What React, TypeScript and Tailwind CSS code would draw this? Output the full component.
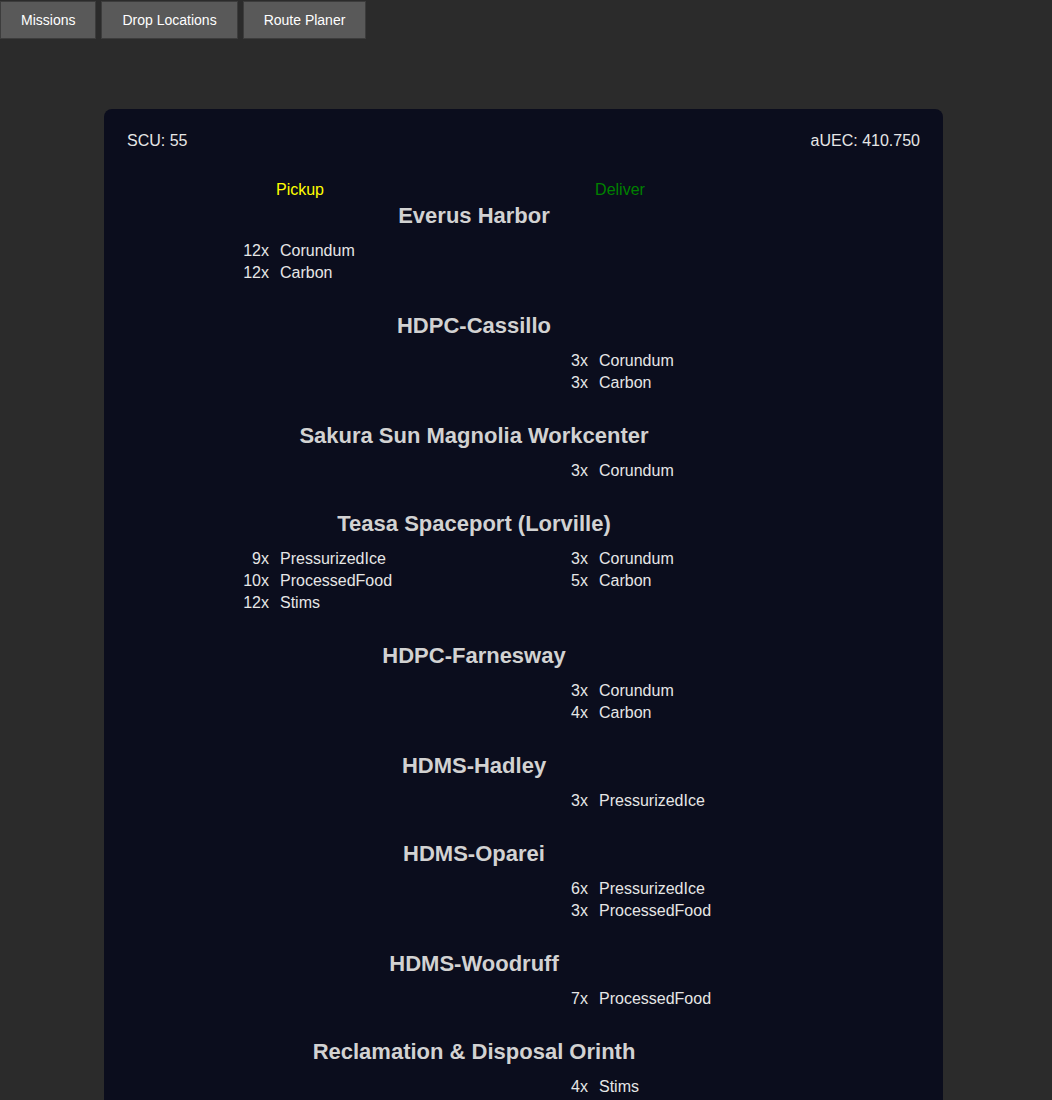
import React from 'react'

type Cargo = { qty: number; name: string }
type Stop = { name: string; pickup: Cargo[]; deliver: Cargo[] }

const stops: Stop[] = [
  {
    name: 'Everus Harbor',
    pickup: [
      { qty: 12, name: 'Corundum' },
      { qty: 12, name: 'Carbon' },
    ],
    deliver: [],
  },
  {
    name: 'HDPC-Cassillo',
    pickup: [],
    deliver: [
      { qty: 3, name: 'Corundum' },
      { qty: 3, name: 'Carbon' },
    ],
  },
  {
    name: 'Sakura Sun Magnolia Workcenter',
    pickup: [],
    deliver: [{ qty: 3, name: 'Corundum' }],
  },
  {
    name: 'Teasa Spaceport (Lorville)',
    pickup: [
      { qty: 9, name: 'PressurizedIce' },
      { qty: 10, name: 'ProcessedFood' },
      { qty: 12, name: 'Stims' },
    ],
    deliver: [
      { qty: 3, name: 'Corundum' },
      { qty: 5, name: 'Carbon' },
    ],
  },
  {
    name: 'HDPC-Farnesway',
    pickup: [],
    deliver: [
      { qty: 3, name: 'Corundum' },
      { qty: 4, name: 'Carbon' },
    ],
  },
  {
    name: 'HDMS-Hadley',
    pickup: [],
    deliver: [{ qty: 3, name: 'PressurizedIce' }],
  },
  {
    name: 'HDMS-Oparei',
    pickup: [],
    deliver: [
      { qty: 6, name: 'PressurizedIce' },
      { qty: 3, name: 'ProcessedFood' },
    ],
  },
  {
    name: 'HDMS-Woodruff',
    pickup: [],
    deliver: [{ qty: 7, name: 'ProcessedFood' }],
  },
  {
    name: 'Reclamation & Disposal Orinth',
    pickup: [],
    deliver: [{ qty: 4, name: 'Stims' }],
  },
]

const tabs = ['Missions', 'Drop Locations', 'Route Planer']

function CargoList({ items, qtyWidth }: { items: Cargo[]; qtyWidth: string }) {
  return (
    <div className="flex flex-col">
      {items.map((c, i) => (
        <div key={i} className="flex h-[22px] items-center leading-[22px]">
          <span className={`${qtyWidth} shrink-0 text-right`}>{c.qty}x</span>
          <span className="ml-[11px]">{c.name}</span>
        </div>
      ))}
    </div>
  )
}

export default function App() {
  return (
    <div
      className="min-h-screen bg-[#2b2b2b] pb-[20px] text-[16px] text-[#e6e6e6]"
      style={{ fontFamily: '"Liberation Sans", Arial, sans-serif' }}
    >
      {/* Tabs */}
      <div className="flex gap-[5px] pt-px">
        {tabs.map((t) => (
          <button
            key={t}
            className="border border-[#3c3c3c] bg-[#595959] px-5 py-[10px] text-[14px] leading-4 text-white"
          >
            {t}
          </button>
        ))}
      </div>

      {/* Route card */}
      <div className="ml-[104px] mt-[70px] w-[839px] rounded-lg bg-[#0b0d1d] px-[23px] pb-[204px] pt-[21px]">
        <div className="flex justify-between leading-[22px]">
          <span>SCU: 55</span>
          <span>aUEC: 410.750</span>
        </div>

        <div className="ml-[27px] mt-[27px] w-[640px]">
          <div className="flex leading-[22px]">
            <div className="w-[292px] text-center text-[#ffff00]">Pickup</div>
            <div className="w-[348px] text-center text-[#008000]">Deliver</div>
          </div>

          {stops.map((s) => (
            <div key={s.name} className="mt-[2px] mb-[29px]">
              <h3 className="text-center text-[22px] font-bold leading-[26px] text-[#d2d2d2]">{s.name}</h3>
              <div className="mt-[11px] flex">
                <div className="w-[292px]">
                  <CargoList items={s.pickup} qtyWidth="w-[115px]" />
                </div>
                <div className="w-[348px]">
                  <CargoList items={s.deliver} qtyWidth="w-[142px]" />
                </div>
              </div>
            </div>
          ))}
        </div>
      </div>
    </div>
  )
}
